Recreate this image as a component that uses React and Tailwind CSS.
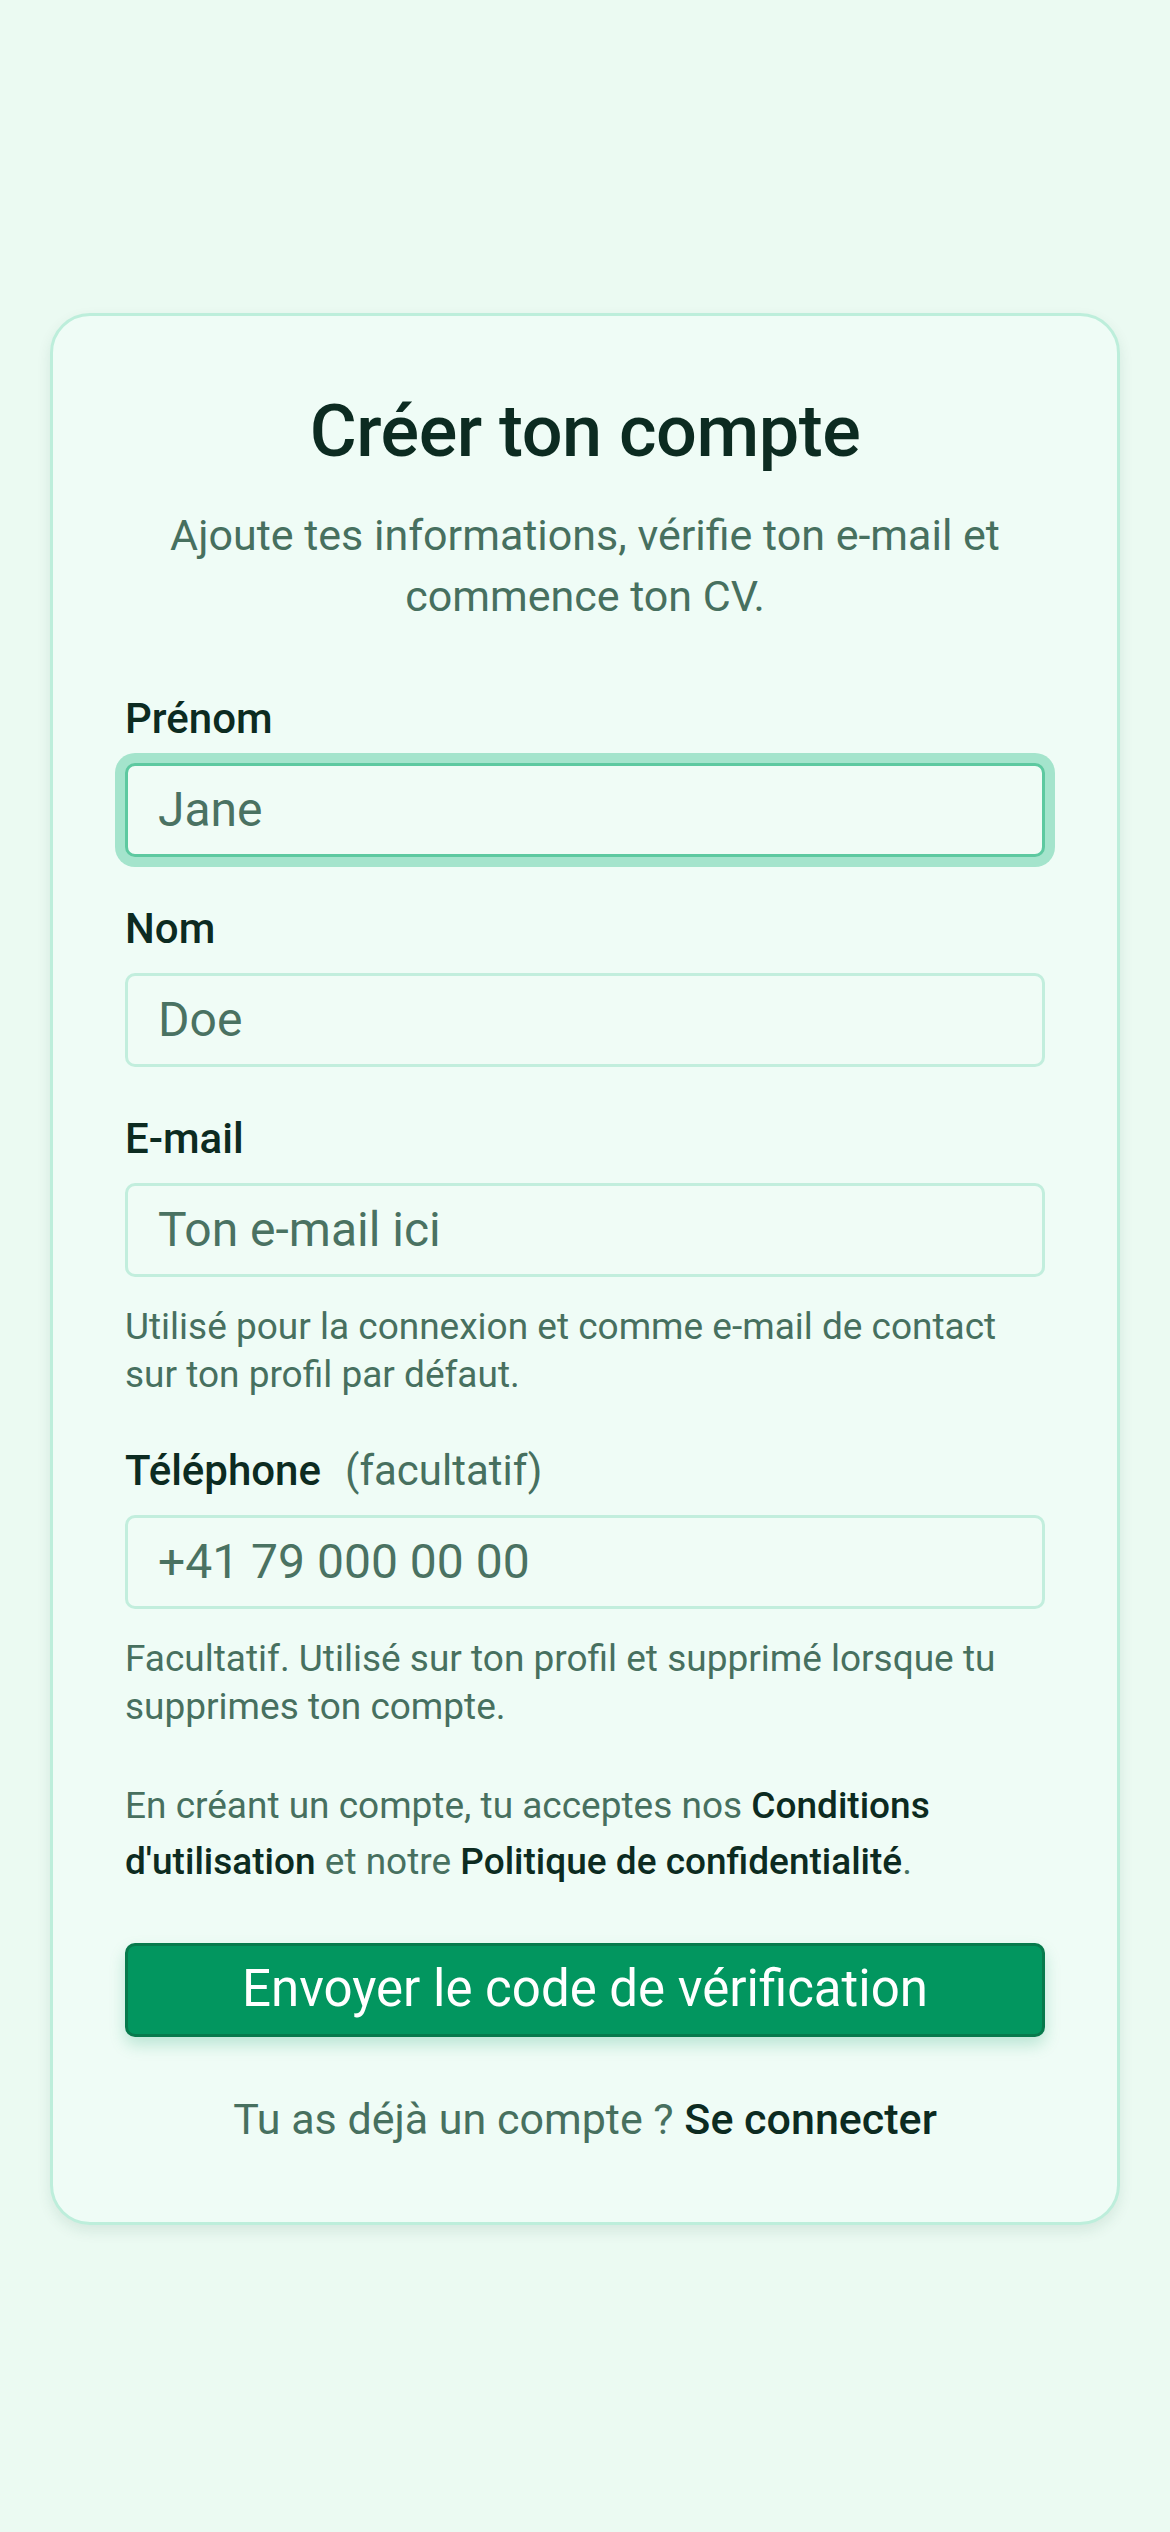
import { useState } from "react";

const MUTED = "text-[#47705f]";
const DARK = "text-[#0c2b21]";

function Field({ label, hint, placeholder, type = "text", focused, help }) {
  return (
    <div className="flex flex-col">
      <label className={`flex items-center text-[42px] leading-[56px] font-medium ${DARK}`}>
        {label}
        {hint && <span className={`ml-[24px] font-normal ${MUTED}`}>{hint}</span>}
      </label>
      <input
        type={type}
        placeholder={placeholder}
        className={
          "mt-[16px] h-[94px] w-full rounded-[10px] border-[3px] bg-[#f0fcf6] pl-[30px] pr-[30px] text-[48px] text-[#0c2b21] outline-none placeholder:text-[#4a7262] " +
          (focused
            ? "border-[#5dc9a0] ring-[10px] ring-[#a4e4cc]"
            : "border-[#c2eedd]")
        }
      />
      {help && (
        <p className={`mt-[26px] text-[37px] leading-[48px] ${MUTED}`}>{help}</p>
      )}
    </div>
  );
}

export default function App() {
  const [sent, setSent] = useState(false);

  return (
    <div
      className="min-h-screen w-full bg-[#ebfaf2] flex items-center justify-center px-[50px] pt-[5px]"
      style={{ fontFamily: "Roboto, 'Liberation Sans', sans-serif" }}
    >
      <div className="w-full rounded-[40px] border-[3px] border-[#bdeedb] bg-[#effcf6] px-[72px] pt-[68px] pb-[73px] shadow-[0_6px_14px_rgba(20,80,60,0.10)]">
        {/* Header */}
        <h1 className={`text-center text-[72px] leading-[96px] font-medium tracking-[-0.5px] ${DARK}`}>
          Créer ton compte
        </h1>
        <p className={`mt-[25px] text-center text-[43px] leading-[61px] ${MUTED}`}>
          Ajoute tes informations, vérifie ton e-mail et commence ton CV.
        </p>

        {/* Fields */}
        <div className="mt-[64px] flex flex-col gap-[44px]">
          <Field label="Prénom" placeholder="Jane" focused />
          <Field label="Nom" placeholder="Doe" />
          <Field
            label="E-mail"
            type="email"
            placeholder="Ton e-mail ici"
            help="Utilisé pour la connexion et comme e-mail de contact sur ton profil par défaut."
          />
          <Field
            label="Téléphone"
            hint="(facultatif)"
            type="tel"
            placeholder="+41 79 000 00 00"
            help="Facultatif. Utilisé sur ton profil et supprimé lorsque tu supprimes ton compte."
          />
        </div>

        {/* Consent */}
        <p className={`mt-[47px] text-[37px] leading-[56px] ${MUTED}`}>
          En créant un compte, tu acceptes nos{" "}
          <a className={`font-medium ${DARK}`}>Conditions d'utilisation</a> et notre{" "}
          <a className={`font-medium ${DARK}`}>Politique de confidentialité</a>.
        </p>

        <button
          onClick={() => setSent(true)}
          className="mt-[53px] flex h-[94px] w-full items-center justify-center rounded-[10px] border-[3px] border-[#077a4c] bg-[#02965f] text-[51px] text-white shadow-[0_8px_16px_rgba(0,150,95,0.22)]"
        >
          {sent ? "Code envoyé" : "Envoyer le code de vérification"}
        </button>

        <p className={`mt-[52px] text-center text-[43px] leading-[60px] ${MUTED}`}>
          Tu as déjà un compte ?{" "}
          <a className={`font-medium ${DARK}`}>Se connecter</a>
        </p>
      </div>
    </div>
  );
}
